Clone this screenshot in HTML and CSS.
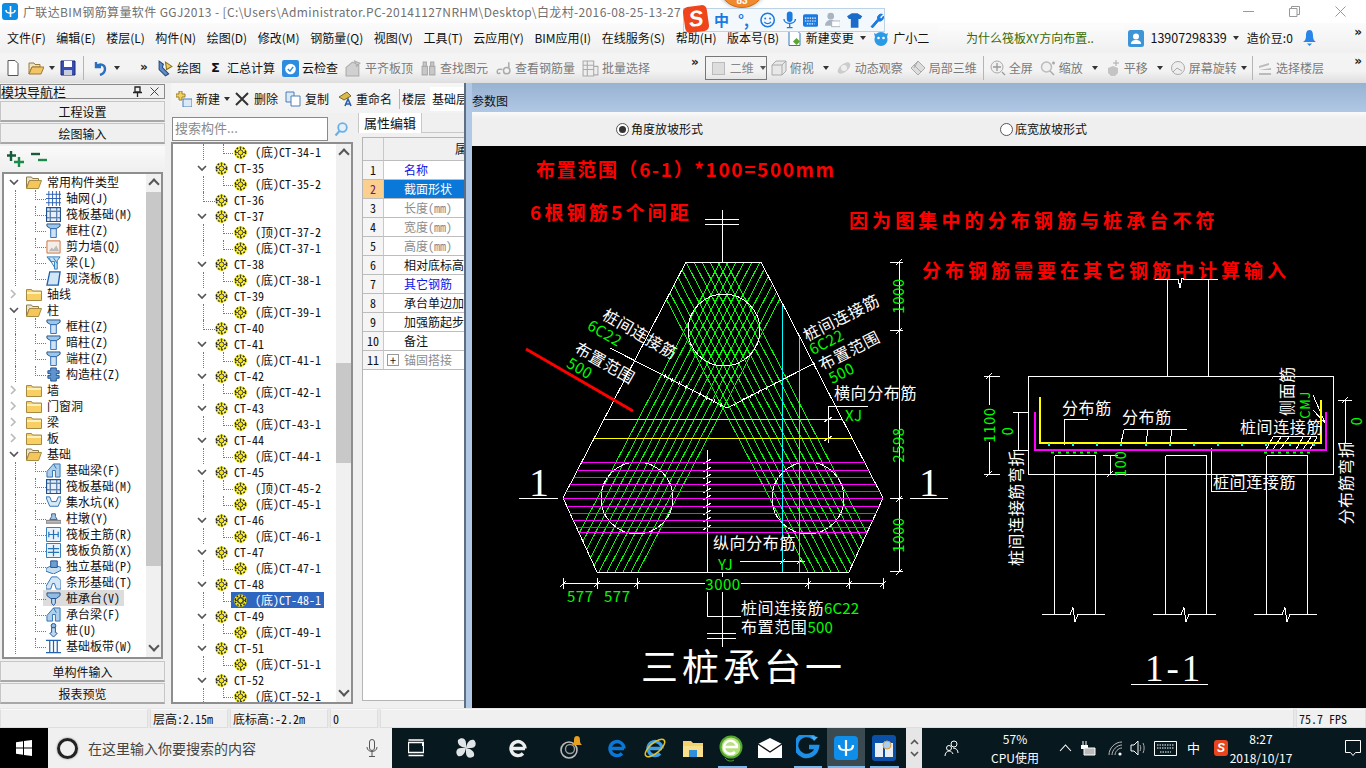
FILE: index.html
```html
<!DOCTYPE html>
<html lang="zh-CN">
<head>
<meta charset="utf-8">
<title>广联达BIM钢筋算量软件 GGJ2013</title>
<link rel="stylesheet" href="styles.css">
</head>
<body>
<svg class="sprites" width="0" height="0" aria-hidden="true">
  <symbol id="gear" viewBox="0 0 13 13"><circle cx="6.5" cy="6.5" r="5" fill="none" stroke="#f5e800" stroke-width="2.6"/><circle cx="6.5" cy="6.5" r="5.2" fill="none" stroke="#222" stroke-width="1.4" stroke-dasharray="1.6 1.7"/><circle cx="6.5" cy="6.5" r="2.6" fill="#f5e800" stroke="#333"/><path d="M6.5 1v3M6.5 9v3M1 6.5h3M9 6.5h3" stroke="#444"/></symbol>
  <symbol id="chev" viewBox="0 0 10 7"><path d="M1 1l4 4 4-4" fill="none" stroke="#555" stroke-width="1.7"/></symbol>
  <symbol id="chevr" viewBox="0 0 7 10"><path d="M1 1l4 4-4 4" fill="none" stroke="#bbb" stroke-width="1.7"/></symbol>
  <symbol id="folder" viewBox="0 0 16 14"><path d="M.5 2.5h5l1 1.5h9v9.500H.5z" fill="#f7cf63" stroke="#a68a45"/><path d="M1 5h14v2H1z" fill="#fdf0b8"/></symbol>
  <symbol id="folderopen" viewBox="0 0 16 14"><path d="M.5 2h5l1 1.500h6v2H3.500L.5 13z" fill="#e8e4d2" stroke="#8f7b45"/><path d="M3.500 5.500h12l-3 8H.5z" fill="#f5c75b" stroke="#a68a45"/></symbol>
  <symbol id="tcol" viewBox="0 0 16 16"><path d="M1 1h14v2.500l-4 2.500H5L1 3.500z" fill="#9cc6ea" stroke="#23507f"/><path d="M5 6h6v9.500H5z" fill="#cfe3f5" stroke="#2b6bb0"/></symbol>
  <symbol id="grid" viewBox="0 0 16 16"><path d="M0 3.500h16M0 8h16M0 12.500h16M3 0v16M7 0v16M11 0v16M14.500 0v16" stroke="#2a5db0" fill="none"/></symbol>
  <symbol id="raft" viewBox="0 0 16 16"><path d="M.5.500h15v15H.5z" fill="#e6f0fa" stroke="#20508f" stroke-width="1.400"/><path d="M4.500 4.500h7v7h-7zM0 4.500h4M12 4.500h4M0 11.500h4M12 11.500h4M4.500 0v4M11.500 0v4M4.500 12v4M11.500 12v4" fill="none" stroke="#20508f"/></symbol>
  <symbol id="wall" viewBox="0 0 16 16"><path d="M1 2h14v13H1z" fill="#f3eee8" stroke="#d06a35"/><path d="M3 13l3-4 2 2 3-4 3 6z" fill="#bbb"/></symbol>
  <symbol id="beam" viewBox="0 0 16 16"><path d="M1 2h14l-3 4v9H9V7H5z" fill="#c4e0f3" stroke="#2c78b8"/><path d="M3 3l6 10M8 3l4 6" stroke="#2c78b8"/></symbol>
  <symbol id="slab" viewBox="0 0 16 16"><path d="M4 1h11l-2 14H1z" fill="#d3e6f6" stroke="#1e5fa8" stroke-width="1.400"/></symbol>
  <symbol id="ccol" viewBox="0 0 16 16"><path d="M5 1h6v3h3v3h-3v2h3v3h-3v3H5v-3H2V9h3V7H2V4h3z" fill="#5f95cf" stroke="#1f4f8f"/></symbol>
  <symbol id="fbeam" viewBox="0 0 16 16"><path d="M1 15V9l7-8h7v14H10V8H7v7z" fill="#aecfea" stroke="#2c6eb0"/><path d="M8 1l3 5" stroke="#2c6eb0"/></symbol>
  <symbol id="sump" viewBox="0 0 16 16"><path d="M0 2h4l2 5h5l2-5h3v3l-3 7H4L1 5z" fill="#d6eaf8" stroke="#2c6eb0"/></symbol>
  <symbol id="pier" viewBox="0 0 16 16"><path d="M6 3h4v3l2 3H4l2-3z" fill="#a9c8e6" stroke="#3a5a88"/><path d="M0 10h16v3H0z" fill="#bbb" stroke="#777"/></symbol>
  <symbol id="rmain" viewBox="0 0 16 16"><path d="M.5.500h15v15H.5z" fill="#e8f2fb" stroke="#2672b8"/><path d="M8 3v10M3 8h10M3 5v6M13 5v6" fill="none" stroke="#2672b8" stroke-width="1.300"/></symbol>
  <symbol id="rneg" viewBox="0 0 16 16"><path d="M.5.500h15v15H.5z" fill="#e8f2fb" stroke="#2672b8"/><path d="M8 2v12M2 6h12M2 10h12" fill="none" stroke="#2672b8" stroke-width="1.300"/></symbol>
  <symbol id="isol" viewBox="0 0 16 16"><path d="M0 10l8-4 8 3v3l-8 4-8-3z" fill="#c7dff2" stroke="#2c6eb0"/><path d="M5 2h7v7H5z" fill="#6f9fd0" stroke="#1f4f8f"/></symbol>
  <symbol id="strip" viewBox="0 0 16 16"><path d="M0 15v-3l6-10h6l4 4v9H11l-2-6H7l-2 6z" fill="#d3e6f6" stroke="#2c6eb0"/></symbol>
  <symbol id="cap" viewBox="0 0 16 16"><path d="M1 2h14v3l-4 3H5L1 5z" fill="#8fbde4" stroke="#1f4f8f"/><path d="M6 8h4v5l-2 2.500L6 13z" fill="#bcd9f1" stroke="#1f4f8f"/></symbol>
  <symbol id="pile" viewBox="0 0 16 16"><circle cx="8" cy="3" r="2.500" fill="#8fbde4" stroke="#1f4f8f"/><path d="M6 5h4v5l2 1-4 4-4-4 2-1z" fill="#bcd9f1" stroke="#1f4f8f"/></symbol>
  <symbol id="band" viewBox="0 0 16 16"><path d="M0 1.500h16M0 14.500h16M4 1v14M8 1v14M12 1v14" stroke="#1f62b0" fill="none" stroke-width="1.300"/></symbol>
  <symbol id="e" viewBox="0 0 24 24"><path d="M6 12.500h13M19 12.500a7 7 0 1 0-2 5" fill="none" stroke="currentColor" stroke-width="3.400"/></symbol>
</svg>

<div class="app">
  <header class="titlebar">
    <span class="applogo"><svg width="15" height="15" viewBox="0 0 15 15"><path d="M7.500 2v11M3 6c0 3 2 3 4.500 3S12 9 12 6" fill="none" stroke="#fff" stroke-width="1.600"/></svg></span>
    <span class="titletext">广联达BIM钢筋算量软件 GGJ2013 - [C:\Users\Administrator.PC-20141127NRHM\Desktop\白龙村-2016-08-25-13-27</span>
    <span class="winbtns">
      <svg width="11" height="11" viewBox="0 0 11 11"><path d="M0 5.500h11" stroke="#999"/></svg>
      <svg width="11" height="11" viewBox="0 0 11 11"><path d="M.5 2.500h7.500v8H.5zM2.500 2.500V.5h8v8H8" fill="none" stroke="#999"/></svg>
      <svg width="11" height="11" viewBox="0 0 11 11"><path d="M.5.500l10 10M10.500.500l-10 10" stroke="#999"/></svg>
    </span>
  </header>

  <nav class="menubar">
    <span>文件(F)</span><span>编辑(E)</span><span>楼层(L)</span><span>构件(N)</span><span>绘图(D)</span><span>修改(M)</span><span>钢筋量(Q)</span><span>视图(V)</span><span>工具(T)</span><span>云应用(Y)</span><span>BIM应用(I)</span><span>在线服务(S)</span><span>帮助(H)</span><span>版本号(B)</span>
    <span class="m-change"><svg width="15" height="17" viewBox="0 0 14 17"><path d="M1.500.500h8l3 3v12h-11z" fill="#fff" stroke="#2c78c8"/><path d="M9 8l3.500 3.500L9 15l-3.500-3.500z" fill="#5da52f"/></svg><span>新建变更</span><i class="caret"></i></span>
    <span class="m-xiao"><svg width="16" height="16" viewBox="0 0 16 16"><path d="M1 3l2 1a7 7 0 0 1 10 0l2-1-1 4a6.500 6.500 0 1 1-12 0z" fill="#2b9ae6"/><circle cx="5.500" cy="8" r="1.300" fill="#fff"/><circle cx="10.500" cy="8" r="1.300" fill="#fff"/></svg><span>广小二</span></span>
    <span class="m-news">为什么筏板XY方向布置..</span>
    <span class="m-user"><svg width="16" height="17" viewBox="0 0 16 17"><rect width="16" height="17" rx="2.500" fill="#3d94d6"/><circle cx="8" cy="6.500" r="3" fill="#fff"/><path d="M3 14c0-3 2-4 5-4s5 1 5 4z" fill="#fff"/></svg><span>13907298339</span><i class="caret"></i><span class="m-dou">造价豆:0</span><svg class="m-bell" width="13" height="18" viewBox="0 0 13 18"><path d="M6.500 1c3 0 3.500 3 3.500 6 0 3 1 5 3 6H0c2-1 3-3 3-6 0-3 .5-6 3.500-6z" fill="#2b84e8"/><path d="M4 14.500h5l-2.500 2.500z" fill="#2b84e8"/></svg></span>
    <span class="more">»</span>
  </nav>

  <div class="toolbar">
    <div class="tb-left">
      <svg class="ic" viewBox="0 0 16 16"><path d="M3 .5h7l3 3v12H3z" fill="#fff" stroke="#555"/></svg>
      <svg class="ic ic-open" viewBox="0 0 16 16"><path d="M1 3h5l1 1.500h5V7H4l-3 7z" fill="#eee3c0" stroke="#9a7b36"/><path d="M4 7h12l-3 7H1z" fill="#f2c465" stroke="#9a7b36"/></svg><i class="caret caret-open"></i>
      <svg class="ic ic-save" viewBox="0 0 16 16"><path d="M1 1h14v14H1z" fill="#3a4fb5" stroke="#1d2a70"/><path d="M4 1h8v6H4z" fill="#fff"/><path d="M4 10h8v5H4z" fill="#c9cde0"/></svg>
      <i class="sep sep-a"></i>
      <svg class="ic ic-undo" viewBox="0 0 16 16"><path d="M4 2v5h5M4 7c3-4 9-3 9 2 0 3-2 5-5 6" fill="none" stroke="#2a6fc0" stroke-width="2.400"/></svg><i class="caret caret-undo"></i>
      <span class="more more-a">»</span>
    </div>
    <div class="tb-group1">
      <span class="tool"><svg class="ic" viewBox="0 0 16 16"><path d="M2 1l4 3-1 3 6 6-3 2-6-6z" fill="#5c8fc8" stroke="#25497e"/><path d="M8 2l6 4-5 3z" fill="#f0d060" stroke="#8a7020"/></svg>绘图</span>
      <span class="tool tool-sigma"><b class="sigma">Σ</b>汇总计算</span>
      <span class="tool"><svg class="ic" viewBox="0 0 16 16"><rect width="16" height="16" rx="2" fill="#2d8ce0"/><circle cx="8" cy="8.500" r="5" fill="#fff"/><path d="M5.500 8.500l2 2 3-4" fill="none" stroke="#2d8ce0" stroke-width="1.400"/></svg>云检查</span>
      <span class="tool off"><svg class="ic" viewBox="0 0 16 16"><path d="M1 15V7l6-5 6 3v10zM9 1l5 2-3 3z" fill="#d0d0d0" stroke="#aaa"/></svg>平齐板顶</span>
      <span class="tool off"><svg class="ic" viewBox="0 0 16 16"><path d="M2 6h5v8H2zM9 6h5v8H9zM3 2h3v4H3zM10 2h3v4h-3z" fill="#c8c8c8" stroke="#aaa"/></svg>查找图元</span>
      <span class="tool off"><svg class="ic" viewBox="0 0 16 16"><circle cx="11" cy="10" r="3" fill="none" stroke="#aaa" stroke-width="1.400"/><path d="M13 7V2M7 9c-3-1-5 0-5 2s2 2 3 1" fill="none" stroke="#aaa" stroke-width="1.400"/></svg>查看钢筋量</span>
      <span class="tool off"><svg class="ic" viewBox="0 0 16 16"><path d="M1 1h10v14H1zM1 5h10M1 9h10M5 1v14M11 6h4v8h-4" fill="#eee" stroke="#aaa"/></svg>批量选择</span>
    </div>
    <div class="tb-group2">
      <span class="more more-b">»</span>
      <span class="combo"><i class="combo-box"></i><span>二维</span><i class="caret"></i></span>
      <span class="tool off"><svg class="ic" viewBox="0 0 16 16"><path d="M1 5h10v10H1zM1 5l4-4h10v10l-4 4M11 5l4-4" fill="#e8e8e8" stroke="#aaa"/></svg>俯视<i class="caret"></i></span>
      <span class="tool off"><svg class="ic" viewBox="0 0 16 16"><ellipse cx="8" cy="8" rx="7.500" ry="4" transform="rotate(-40 8 8)" fill="#ccc"/><circle cx="8" cy="8" r="3" fill="#eee"/></svg>动态观察</span>
      <span class="tool off"><svg class="ic" viewBox="0 0 16 16"><path d="M1 8l7-7 7 7-7 7z" fill="#ddd" stroke="#aaa"/><path d="M4 5l7 7M8 1l-4 7" stroke="#aaa"/></svg>局部三维</span>
      <i class="sep sep-b"></i>
      <span class="tool off"><svg class="ic" viewBox="0 0 16 16"><circle cx="7" cy="7" r="6" fill="#f0f0f0" stroke="#aaa"/><path d="M7 3v8M3 7h8M12 12l3 3" stroke="#999" stroke-width="1.300"/></svg>全屏</span>
      <span class="tool off"><svg class="ic" viewBox="0 0 16 16"><circle cx="6.500" cy="7" r="5" fill="#f0f0f0" stroke="#bbb" stroke-width="1.500"/><path d="M10 11l4 4M12 3h3M13.500 1.500v3" stroke="#aaa" stroke-width="1.500"/></svg>缩放<i class="caret"></i></span>
      <span class="tool off"><svg class="ic" viewBox="0 0 16 16"><path d="M3 8l5-2 5 2v5l-3 3H6l-3-3z" fill="#c4c4c4"/><path d="M11 0v6M8 3h6" stroke="#aaa"/></svg>平移<i class="caret"></i></span>
      <span class="tool off"><svg class="ic" viewBox="0 0 16 16"><circle cx="8" cy="8" r="6.500" fill="#eee" stroke="#aaa"/><path d="M3 12l4-4 5 3" fill="none" stroke="#aaa"/></svg>屏幕旋转<i class="caret caret-tight"></i></span>
      <i class="sep sep-c"></i>
      <span class="tool off"><svg class="ic" viewBox="0 0 16 16"><path d="M2 6l10-3v2L2 8zM2 10l12-2v2H2zM2 13h12v2H2z" fill="#bbb"/></svg>选择楼层</span>
      <span class="more more-c">»</span>
    </div>
  </div>

  <main class="main">
    <aside class="nav">
      <div class="nav-head"><span>模块导航栏</span><span class="nav-ctl"><svg width="9" height="11" viewBox="0 0 9 11"><path d="M2 1h5v5H2zM0 6.500h9M4.500 6.500V11" fill="none" stroke="#222" stroke-width="1.300"/></svg><svg width="9" height="9" viewBox="0 0 9 9"><path d="M.5.500l8 8M8.500.500l-8 8" stroke="#444"/></svg></span></div>
      <div class="nav-btn nav-btn-wide">工程设置</div>
      <div class="nav-btn">绘图输入</div>
      <div class="nav-tools">
        <svg width="18" height="16" viewBox="0 0 18 16"><path d="M4 0v10M0 4.500h9" stroke="#1c5a3c" stroke-width="2.400"/><path d="M12 6v10M7 11h10" stroke="#1a8a4a" stroke-width="2.400"/></svg>
        <svg width="18" height="16" viewBox="0 0 18 16"><path d="M1 3h9" stroke="#1c5a3c" stroke-width="2.400"/><path d="M8 9h9" stroke="#1a8a4a" stroke-width="2.400"/></svg>
      </div>
      <div class="nt">
        <div class="nt-rows">
          <div class="nt-f"><svg class="cv"><use href="#chev"/></svg><svg class="fd"><use href="#folderopen"/></svg><span>常用构件类型</span></div>
          <div class="nt-c"><svg class="ci"><use href="#grid"/></svg><span>轴网(J)</span></div>
          <div class="nt-c"><svg class="ci"><use href="#raft"/></svg><span>筏板基础(M)</span></div>
          <div class="nt-c"><svg class="ci"><use href="#tcol"/></svg><span>框柱(Z)</span></div>
          <div class="nt-c"><svg class="ci"><use href="#wall"/></svg><span>剪力墙(Q)</span></div>
          <div class="nt-c"><svg class="ci"><use href="#beam"/></svg><span>梁(L)</span></div>
          <div class="nt-c"><svg class="ci"><use href="#slab"/></svg><span>现浇板(B)</span></div>
          <div class="nt-f"><svg class="cvr"><use href="#chevr"/></svg><svg class="fd"><use href="#folder"/></svg><span>轴线</span></div>
          <div class="nt-f"><svg class="cv"><use href="#chev"/></svg><svg class="fd"><use href="#folderopen"/></svg><span>柱</span></div>
          <div class="nt-c"><svg class="ci"><use href="#tcol"/></svg><span>框柱(Z)</span></div>
          <div class="nt-c"><svg class="ci"><use href="#tcol"/></svg><span>暗柱(Z)</span></div>
          <div class="nt-c"><svg class="ci"><use href="#tcol"/></svg><span>端柱(Z)</span></div>
          <div class="nt-c"><svg class="ci"><use href="#ccol"/></svg><span>构造柱(Z)</span></div>
          <div class="nt-f"><svg class="cvr"><use href="#chevr"/></svg><svg class="fd"><use href="#folder"/></svg><span>墙</span></div>
          <div class="nt-f"><svg class="cvr"><use href="#chevr"/></svg><svg class="fd"><use href="#folder"/></svg><span>门窗洞</span></div>
          <div class="nt-f"><svg class="cvr"><use href="#chevr"/></svg><svg class="fd"><use href="#folder"/></svg><span>梁</span></div>
          <div class="nt-f"><svg class="cvr"><use href="#chevr"/></svg><svg class="fd"><use href="#folder"/></svg><span>板</span></div>
          <div class="nt-f"><svg class="cv"><use href="#chev"/></svg><svg class="fd"><use href="#folderopen"/></svg><span>基础</span></div>
          <div class="nt-c"><svg class="ci"><use href="#fbeam"/></svg><span>基础梁(F)</span></div>
          <div class="nt-c"><svg class="ci"><use href="#raft"/></svg><span>筏板基础(M)</span></div>
          <div class="nt-c"><svg class="ci"><use href="#sump"/></svg><span>集水坑(K)</span></div>
          <div class="nt-c"><svg class="ci"><use href="#pier"/></svg><span>柱墩(Y)</span></div>
          <div class="nt-c"><svg class="ci"><use href="#rmain"/></svg><span>筏板主筋(R)</span></div>
          <div class="nt-c"><svg class="ci"><use href="#rneg"/></svg><span>筏板负筋(X)</span></div>
          <div class="nt-c"><svg class="ci"><use href="#isol"/></svg><span>独立基础(P)</span></div>
          <div class="nt-c"><svg class="ci"><use href="#strip"/></svg><span>条形基础(T)</span></div>
          <div class="nt-c nt-cur"><svg class="ci"><use href="#cap"/></svg><span>桩承台(V)</span></div>
          <div class="nt-c"><svg class="ci"><use href="#fbeam"/></svg><span>承台梁(F)</span></div>
          <div class="nt-c"><svg class="ci"><use href="#pile"/></svg><span>桩(U)</span></div>
          <div class="nt-c"><svg class="ci"><use href="#band"/></svg><span>基础板带(W)</span></div>
        </div>
        <div class="sb sb-nav"><i class="sb-up"></i><i class="sb-thumb"></i><i class="sb-fill"></i><i class="sb-down"></i></div>
      </div>
      <div class="nav-btn nav-btn-wide">单构件输入</div>
      <div class="nav-btn">报表预览</div>
    </aside>

    <section class="mid">
      <div class="mid-tools">
        <span class="tool"><svg class="ic" viewBox="0 0 16 16"><path d="M3 0h3v3h3v3H6v3H3V6H0V3h3z" fill="#f2d35a" stroke="#9a8030"/><path d="M7 8h9v8H7z" fill="#dbe9f7" stroke="#4a7fb8"/></svg>新建<i class="caret"></i></span>
        <span class="tool"><svg class="ic" viewBox="0 0 16 16"><path d="M2 2l12 12M14 2L2 14" stroke="#333" stroke-width="2"/></svg>删除</span>
        <span class="tool"><svg class="ic" viewBox="0 0 16 16"><path d="M1 1h8v10H1z" fill="#dce9f6" stroke="#4a7fb8"/><path d="M6 5h9v10H6z" fill="#fff" stroke="#4a7fb8"/></svg>复制</span>
        <span class="tool"><svg class="ic" viewBox="0 0 16 16"><path d="M3 6l8-5 4 4-7 4z" fill="#d9b84c" stroke="#7a6a20"/><path d="M9 15l3-7 3 7M10 13h4" fill="none" stroke="#2a5fb0" stroke-width="1.600"/></svg>重命名</span>
        <i class="sep sep-d"></i>
        <span class="mid-floor">楼层</span>
        <span class="mid-layer">基础层</span>
      </div>
      <div class="mid-body">
        <div class="comp">
          <div class="search"><span class="search-box">搜索构件...</span><svg class="search-ic" width="14" height="15" viewBox="0 0 14 15"><circle cx="8.500" cy="5.500" r="4.300" fill="#e4f1fb" stroke="#6ab0e6" stroke-width="1.800"/><path d="M5.500 9l-4 4.500" stroke="#6ab0e6" stroke-width="2.200"/></svg></div>
          <div class="ct">
            <div class="ct-rows">
              <div class="ct-l"><span class="ct-i"><svg class="g"><use href="#gear"/></svg><span>(底)CT-34-1</span></span></div>
              <div class="ct-p"><svg class="cv"><use href="#chev"/></svg><svg class="g"><use href="#gear"/></svg><span>CT-35</span></div>
              <div class="ct-l"><span class="ct-i"><svg class="g"><use href="#gear"/></svg><span>(底)CT-35-2</span></span></div>
              <div class="ct-p ct-n"><i class="cv"></i><svg class="g"><use href="#gear"/></svg><span>CT-36</span></div>
              <div class="ct-p"><svg class="cv"><use href="#chev"/></svg><svg class="g"><use href="#gear"/></svg><span>CT-37</span></div>
              <div class="ct-l"><span class="ct-i"><svg class="g"><use href="#gear"/></svg><span>(顶)CT-37-2</span></span></div>
              <div class="ct-l"><span class="ct-i"><svg class="g"><use href="#gear"/></svg><span>(底)CT-37-1</span></span></div>
              <div class="ct-p"><svg class="cv"><use href="#chev"/></svg><svg class="g"><use href="#gear"/></svg><span>CT-38</span></div>
              <div class="ct-l"><span class="ct-i"><svg class="g"><use href="#gear"/></svg><span>(底)CT-38-1</span></span></div>
              <div class="ct-p"><svg class="cv"><use href="#chev"/></svg><svg class="g"><use href="#gear"/></svg><span>CT-39</span></div>
              <div class="ct-l"><span class="ct-i"><svg class="g"><use href="#gear"/></svg><span>(底)CT-39-1</span></span></div>
              <div class="ct-p ct-n"><i class="cv"></i><svg class="g"><use href="#gear"/></svg><span>CT-40</span></div>
              <div class="ct-p"><svg class="cv"><use href="#chev"/></svg><svg class="g"><use href="#gear"/></svg><span>CT-41</span></div>
              <div class="ct-l"><span class="ct-i"><svg class="g"><use href="#gear"/></svg><span>(底)CT-41-1</span></span></div>
              <div class="ct-p"><svg class="cv"><use href="#chev"/></svg><svg class="g"><use href="#gear"/></svg><span>CT-42</span></div>
              <div class="ct-l"><span class="ct-i"><svg class="g"><use href="#gear"/></svg><span>(底)CT-42-1</span></span></div>
              <div class="ct-p"><svg class="cv"><use href="#chev"/></svg><svg class="g"><use href="#gear"/></svg><span>CT-43</span></div>
              <div class="ct-l"><span class="ct-i"><svg class="g"><use href="#gear"/></svg><span>(底)CT-43-1</span></span></div>
              <div class="ct-p"><svg class="cv"><use href="#chev"/></svg><svg class="g"><use href="#gear"/></svg><span>CT-44</span></div>
              <div class="ct-l"><span class="ct-i"><svg class="g"><use href="#gear"/></svg><span>(底)CT-44-1</span></span></div>
              <div class="ct-p"><svg class="cv"><use href="#chev"/></svg><svg class="g"><use href="#gear"/></svg><span>CT-45</span></div>
              <div class="ct-l"><span class="ct-i"><svg class="g"><use href="#gear"/></svg><span>(顶)CT-45-2</span></span></div>
              <div class="ct-l"><span class="ct-i"><svg class="g"><use href="#gear"/></svg><span>(底)CT-45-1</span></span></div>
              <div class="ct-p"><svg class="cv"><use href="#chev"/></svg><svg class="g"><use href="#gear"/></svg><span>CT-46</span></div>
              <div class="ct-l"><span class="ct-i"><svg class="g"><use href="#gear"/></svg><span>(底)CT-46-1</span></span></div>
              <div class="ct-p"><svg class="cv"><use href="#chev"/></svg><svg class="g"><use href="#gear"/></svg><span>CT-47</span></div>
              <div class="ct-l"><span class="ct-i"><svg class="g"><use href="#gear"/></svg><span>(底)CT-47-1</span></span></div>
              <div class="ct-p"><svg class="cv"><use href="#chev"/></svg><svg class="g"><use href="#gear"/></svg><span>CT-48</span></div>
              <div class="ct-l ct-sel"><span class="ct-i"><svg class="g"><use href="#gear"/></svg><span>(底)CT-48-1</span></span></div>
              <div class="ct-p"><svg class="cv"><use href="#chev"/></svg><svg class="g"><use href="#gear"/></svg><span>CT-49</span></div>
              <div class="ct-l"><span class="ct-i"><svg class="g"><use href="#gear"/></svg><span>(底)CT-49-1</span></span></div>
              <div class="ct-p"><svg class="cv"><use href="#chev"/></svg><svg class="g"><use href="#gear"/></svg><span>CT-51</span></div>
              <div class="ct-l"><span class="ct-i"><svg class="g"><use href="#gear"/></svg><span>(底)CT-51-1</span></span></div>
              <div class="ct-p"><svg class="cv"><use href="#chev"/></svg><svg class="g"><use href="#gear"/></svg><span>CT-52</span></div>
              <div class="ct-l"><span class="ct-i"><svg class="g"><use href="#gear"/></svg><span>(底)CT-52-1</span></span></div>
            </div>
            <div class="sb sb-ct"><i class="sb-up"></i><i class="sb-fill sb-before"></i><i class="sb-thumb"></i><i class="sb-fill"></i><i class="sb-down"></i></div>
          </div>
        </div>
        <div class="props">
          <div class="tabs"><span class="tab">属性编辑</span></div>
          <div class="ptable">
            <div class="pn pn-h"></div><div class="pv pv-h">属性名称</div>
            <div class="pn">1</div><div class="pv blue">名称</div>
            <div class="pn pn-sel">2</div><div class="pv pv-sel">截面形状</div>
            <div class="pn">3</div><div class="pv gray">长度(mm)</div>
            <div class="pn">4</div><div class="pv gray">宽度(mm)</div>
            <div class="pn">5</div><div class="pv gray">高度(mm)</div>
            <div class="pn">6</div><div class="pv">相对底标高(m)</div>
            <div class="pn">7</div><div class="pv blue">其它钢筋</div>
            <div class="pn">8</div><div class="pv">承台单边加强筋</div>
            <div class="pn">9</div><div class="pv">加强筋起步(mm)</div>
            <div class="pn">10</div><div class="pv">备注</div>
            <div class="pn">11</div><div class="pv gray pv-plus"><i class="plus">+</i>锚固搭接</div>
          </div>
        </div>
      </div>
    </section>

    <div class="split"></div>

    <section class="param">
      <div class="param-head">参数图</div>
      <div class="param-radios">
        <label class="radio radio-a"><i class="dot on"></i>角度放坡形式</label>
        <label class="radio radio-b"><i class="dot"></i>底宽放坡形式</label>
      </div>
      <div class="canvas">
        <svg class="cad" viewBox="472 146 894 561" width="894" height="561">
          <defs>
            <clipPath id="hex"><path d="M686 262H761L883 498 849 572H597L563 498z"/></clipPath>
          </defs>
          <g clip-path="url(#hex)" class="ln g1">
            <path d="M720 262L559 572M728 262L567 572M736 262L575 572M744 262L583 572M752 262L591 572M760 262L599 572M768 262L607 572M776 262L615 572M784 262L623 572M792 262L631 572M799 262L638 572"/>
            <path d="M726 262L887 572M718 262L879 572M710 262L871 572M702 262L863 572M694 262L855 572M686 262L847 572M678 262L839 572M670 262L831 572M662 262L823 572M654 262L815 572M647 262L808 572"/>
          </g>
          <g class="ln wh">
            <path d="M686 262H761L883 498 849 572H597L563 498z"/>
            <circle cx="724" cy="330" r="36"/><circle cx="637" cy="498" r="36"/><circle cx="808" cy="498" r="36"/>
            <path d="M722.500 210V262M705 219.500H739M705 224H739"/>
            <path d="M610 348L727 408 815 363"/>
            <path d="M664 378l2-4M671 382l2-4M678 385l2-4M685 389l2-4M692 393l2-4M699 396l2-4M706 400l2-4M713 403l2-4M720 407l2-4M734 406l2-4M742 402l2-4M750 398l2-4M758 394l2-4M766 390l2-4M774 386l2-4M782 382l2-4"/>
            <path d="M519 498.500H558M910 498.500H948"/>
            <path d="M899 262V572M890 262.500H903M890 330.500H903M890 498.500H903M890 571.500H903M896 265l6-6M896 334l6-6M896 502l6-6M896 575l6-6"/>
            <path d="M563 583.500H705M741 583.500H884M563 578V589M597 578V589M637 578V589M808 578V589M849 578V589M883 578V589M560 587l6-6M594 587l6-6M634 587l6-6M805 587l6-6M846 587l6-6M880 587l6-6"/>
            <path d="M707.500 450V572M707.500 592V616H741M722.500 572V577M722.500 592V647M707 633H736M707 638.500H736"/>
            <path d="M703 464l8-5M703 472l8-5M703 479l8-5M703 486l8-5M703 493l8-5M703 500l8-5M703 508l8-5M703 515l8-5M703 522l8-5M703 530l8-5"/>
            <path d="M828 443V406H868M824 422l8-5M824 441l8-5"/>
            <path d="M740 561.500H805M780 564l5-5M797 564l5-5"/>
          </g>
          <g clip-path="url(#hex)" class="ln mg">
            <path d="M560 462.500H890M560 470.500H890M560 477.500H890M560 484.500H890M560 491.500H890M560 498.500H890M560 506.500H890M560 513.500H890M560 520.500H890M560 527.500H890M560 532.500H890"/>
          </g>
          <g clip-path="url(#hex)" class="ln yl"><path d="M580 419.500H870M580 438.500H870"/></g>
          <path class="ln cy" d="M782.500 305V572M799.500 337V572"/>
          <path class="ln rd3" d="M526 349L633 411"/>

          <text class="red-b" x="536" y="177">布置范围（6-1）*100=500mm</text>
          <text class="red-c" x="530" y="220">6根钢筋5个间距</text>
          <text class="red-s" x="849" y="228">因为图集中的分布钢筋与桩承台不符</text>
          <text class="red-s red-s2" x="922" y="278">分布钢筋需要在其它钢筋中计算输入</text>

          <text class="t16 mid-a" transform="translate(637 339) rotate(30)">桩间连接筋</text>
          <text class="gn mid-a" transform="translate(602 338) rotate(30)">6C22</text>
          <text class="t16 mid-a" transform="translate(602 368) rotate(30)">布置范围</text>
          <text class="gn mid-a" transform="translate(577 373) rotate(30)">500</text>
          <text class="t16 mid-a" transform="translate(844 323) rotate(-27)">桩间连接筋</text>
          <text class="gn mid-a" transform="translate(829 347) rotate(-27)">6C22</text>
          <text class="t16 mid-a" transform="translate(852 356) rotate(-27)">布置范围</text>
          <text class="gn mid-a" transform="translate(844 378) rotate(-27)">500</text>
          <text class="t16" x="834" y="399">横向分布筋</text>
          <text class="gn" x="845" y="421">XJ</text>
          <text class="t16" x="713" y="549">纵向分布筋</text>
          <text class="gn" x="718" y="570">YJ</text>
          <text class="t-one" x="539" y="496">1</text>
          <text class="t-one" x="929" y="496">1</text>
          <text class="gn mid-a" x="723" y="590">3000</text>
          <text class="gn" x="567" y="602">577</text>
          <text class="gn" x="604" y="602">577</text>
          <text class="gn mid-a" transform="translate(904 296) rotate(-90)">1000</text>
          <text class="gn mid-a" transform="translate(904 445) rotate(-90)">2598</text>
          <text class="gn mid-a" transform="translate(904 535) rotate(-90)">1000</text>
          <text class="t16" x="741" y="614">桩间连接筋<tspan class="gn-in">6C22</tspan></text>
          <text class="t16" x="741" y="633">布置范围<tspan class="gn-in">500</tspan></text>
          <text class="t-big" x="641" y="681">三桩承台一</text>

          <g class="ln wh">
            <path d="M1028.500 376.500H1333.500V474.500H1028.500z"/>
            <path d="M1167.500 279V376M1208.500 279V376M1155 279.500H1178l2 8 2-9 3 1H1218"/>
            <path d="M1054.500 455.500V614M1095.500 455.500V614M1054.500 455.500H1095.500M1042 614.500H1070l3-7 2 14 3-7H1105"/>
            <path d="M1165.500 455.500V614M1206.500 455.500V614M1165.500 455.500H1206.500M1153 614.500H1181l3-7 2 14 3-7H1216"/>
            <path d="M1266.500 455.500V614M1307.500 455.500V614M1266.500 455.500H1307.500M1254 614.500H1282l3-7 2 14 3-7H1317"/>
            <path d="M1064.500 445V419.500H1088M1124 429.500H1187M1124 430L1121 443M1148 430L1146 443M1172 430L1170 443"/>
            <path d="M1273 436.500H1317M1273 437L1265 451M1281 437L1272 451M1289 437L1279 451M1303 437L1295 451M1311 437L1302 451M1317 437L1309 451"/>
            <path d="M1211.500 448V491H1247"/>
            <path d="M1313 395L1326 425M1313 410L1326 424"/>
            <path d="M989.500 376.500V405M989.500 442V474.500M984 376.500H1000M984 474.500H1000M986 379l6-6M986 477l6-6"/>
            <path d="M1018.500 412V450M1013 412.500H1028M1013 450.500H1028"/>
            <path d="M1345.500 400V443M1338 400.500H1352M1338 443.500H1352M1342 403l6-6"/>
            <path d="M1110.500 455V474M1103 455.500H1118M1107 477l6-6"/>
            <path d="M1131 684.500H1208"/>
          </g>
          <path class="ln yl2" d="M1040 397V443H1321V400"/>
          <path class="ln mg2" d="M1035 412V450H1326V412"/>
          <g class="cdots">
            <path d="M1048 444.500h2M1072 444.500h2M1096 444.500h2M1120 444.500h2M1145 444.500h2M1169 444.500h2M1193 444.500h2M1217 444.500h2M1241 444.500h2M1265 444.500h2M1289 444.500h2M1313 444.500h2"/>
          </g>
          <g class="gdots">
            <path d="M1051 452.500h3M1058 452.500h3M1066 452.500h3M1073 452.500h3M1080 452.500h3M1087 452.500h3M1094 452.500h3M1264 452.500h3M1271 452.500h3M1278 452.500h3M1286 452.500h3M1293 452.500h3M1300 452.500h3M1307 452.500h3"/>
          </g>
          <text class="t16" x="1062" y="414">分布筋</text>
          <text class="t16" x="1122" y="423">分布筋</text>
          <text class="t16" x="1240" y="433">桩间连接筋</text>
          <text class="t16" x="1213" y="488">桩间连接筋</text>
          <text class="t16 mid-a" transform="translate(1292.500 391) rotate(-90)">侧面筋</text>
          <text class="gn gn-s mid-a" transform="translate(1309.500 405) rotate(-90)">CMJ</text>
          <text class="gn mid-a" transform="translate(995 425) rotate(-90)">1100</text>
          <text class="gn mid-a" transform="translate(1013 431) rotate(-90)">0</text>
          <text class="t16 mid-a" transform="translate(1022 508) rotate(-90)">桩间连接筋弯折</text>
          <text class="gn mid-a" transform="translate(1362 421) rotate(-90)">0</text>
          <text class="t16 mid-a" transform="translate(1352 483) rotate(-90)">分布筋弯折</text>
          <text class="gn mid-a" transform="translate(1126 464) rotate(-90)">100</text>
          <text class="t-big t-11" x="1145" y="681">1-1</text>
        </svg>
      </div>
    </section>
  </main>

  <footer class="status">
    <span class="st st-1"></span><span class="st st-2">层高:2.15m</span><span class="st st-3">底标高:-2.2m</span><span class="st st-4">0</span><span class="st st-5"></span><span class="st st-6">75.7 FPS</span>
  </footer>

  <div class="taskbar">
    <span class="start"><svg width="16" height="16" viewBox="0 0 16 16"><path d="M0 2.200L7 1.200V7.500H0zM8 1L16 0V7.500H8zM0 8.500H7V14.800L0 13.800zM8 8.500H16V16L8 15z" fill="#fff"/></svg></span>
    <span class="tsearch"><i class="cortana"></i><span class="tsearch-text">在这里输入你要搜索的内容</span><svg class="tmic" width="12" height="18" viewBox="0 0 12 18"><rect x="3.500" y=".5" width="5" height="11" rx="2.500" fill="none" stroke="#555"/><path d="M1 8c0 6 10 6 10 0M6 13v4M3 17.500h6" fill="none" stroke="#555"/></svg></span>
    <span class="tapps">
      <span class="tapp"><svg width="16" height="18" viewBox="0 0 16 18"><path d="M.5 3.500h15v10H.5zM.5 1h15M.5 16.500h15" fill="none" stroke="#fff" stroke-width="1.300"/><path d="M14 4h2v3h-2z" fill="#fff"/></svg></span>
      <span class="tapp ta-fan"><svg width="24" height="24" viewBox="0 0 24 24"><path d="M12 12C6 11 3 8 4 4c3-3 8-2 8 3zM12 12c1-6 4-9 8-8 3 3 2 8-3 8zM12 12c6 1 9 4 8 8-3 3-8 2-8-3zM12 12c-1 6-4 9-8 8-3-3-2-8 3-8z" fill="#dfe4e6"/></svg></span>
      <span class="tapp ta-ie1"><svg class="e-w" width="24" height="24"><use href="#e"/></svg></span>
      <span class="tapp ta-spiral"><svg width="26" height="26" viewBox="0 0 26 26"><circle cx="11" cy="15" r="8" fill="none" stroke="#bbb" stroke-width="1.600"/><circle cx="12" cy="14" r="4.500" fill="none" stroke="#999" stroke-width="1.400"/><path d="M19 1c3 0 3 3 3 5 0 2 1 3 2 4H14c1-1 2-2 2-4 0-2 0-5 3-5z" fill="#e8a020"/></svg></span>
      <span class="tapp ta-edge"><svg class="e-b" width="24" height="24"><use href="#e"/></svg></span>
      <span class="tapp"><svg class="e-l" width="24" height="24" viewBox="0 0 24 24"><use href="#e"/><ellipse cx="12" cy="12" rx="12" ry="5" transform="rotate(-40 12 12)" fill="none" stroke="#e8c02a" stroke-width="1.500"/></svg></span>
      <span class="tapp"><svg width="22" height="20" viewBox="0 0 22 20"><path d="M1 3h8l2 2h10v14H1z" fill="#f3d36d"/><path d="M1 8h20v11H1z" fill="#f8e08c"/><path d="M7 12h8v7H7z" fill="#2f8fdc"/></svg></span>
      <span class="tapp"><svg width="24" height="30" viewBox="0 0 24 30"><circle cx="12" cy="14" r="10.500" fill="#b9e080" stroke="#4fa82d" stroke-width="2"/><path d="M5 14h14M18 14a6.500 6.500 0 1 0-2 5" fill="none" stroke="#fff" stroke-width="2.600"/><path d="M6 25c2 3 6 4 9 2" fill="none" stroke="#4fa82d"/></svg></span>
      <span class="tapp"><svg width="24" height="20" viewBox="0 0 24 20"><path d="M0 6L12 0l12 6v14H0z" fill="#fff"/><path d="M0 6l12 8 12-8" fill="none" stroke="#111" stroke-width="1.400"/></svg></span>
      <span class="tapp"><svg width="24" height="26" viewBox="0 0 24 26"><path d="M18 3a10.500 10.500 0 1 0 3 9h-8" fill="none" stroke="#1e8fe6" stroke-width="4.500"/><path d="M15 1l7 1-4 4z" fill="#4fb0f0"/></svg></span>
      <span class="tapp tapp-on"><svg width="24" height="24" viewBox="0 0 24 24"><rect width="24" height="24" rx="4" fill="#0f8ee9"/><path d="M12 4v16M5 9c0 5 3 5 7 5s7 0 7-5" fill="none" stroke="#fff" stroke-width="2.200"/></svg></span>
      <span class="tapp"><svg width="24" height="26" viewBox="0 0 24 26"><rect width="24" height="26" rx="3" fill="#0a4fa8"/><path d="M3 8h8v14H3zM13 8h8v14h-8z" fill="#e8eef4"/><circle cx="15" cy="10" r="4" fill="#a8d0f0" stroke="#e09a30"/></svg></span>
      <span class="bars"></span>
    </span>
    <span class="tstrip"><svg width="9" height="6" viewBox="0 0 9 6"><path d="M1 5l3.500-3.500L8 5" fill="none" stroke="#555" stroke-width="1.600"/></svg><svg width="9" height="6" viewBox="0 0 9 6"><path d="M1 1l3.500 3.500L8 1" fill="none" stroke="#555" stroke-width="1.600"/></svg></span>
    <span class="tray">
      <svg class="tr-ppl" width="16" height="18" viewBox="0 0 16 18"><circle cx="10" cy="5" r="3" fill="none" stroke="#fff"/><circle cx="5" cy="9" r="2.500" fill="none" stroke="#fff"/><path d="M1 17c0-3 2-5 4-5s3 1 4 3M9 9c3 0 5 2 5 5" fill="none" stroke="#fff"/></svg>
      <span class="tr-cpu"><span>57%</span><span>CPU使用</span></span>
      <svg class="tr-up" width="13" height="8" viewBox="0 0 13 8"><path d="M1 7l5.500-6L12 7" fill="none" stroke="#fff" stroke-width="1.100"/></svg>
      <svg class="tr-bat" width="17" height="15" viewBox="0 0 17 15"><path d="M3 0v4M6 0v4" stroke="#fff"/><path d="M1 4h7v4H1z" fill="#fff"/><path d="M4 7h11v7H4z" fill="#bbb" stroke="#fff"/></svg>
      <svg class="tr-wifi" width="15" height="15" viewBox="0 0 15 15"><path d="M1 14C1 7 7 1 14 1M4 14c0-5 5-10 10-10M7 14c0-3 3-7 7-7" fill="none" stroke="#bbb"/><circle cx="12" cy="13" r="1.600" fill="#fff"/></svg>
      <svg class="tr-vol" width="16" height="16" viewBox="0 0 16 16"><path d="M1 5h3l4-4v14l-4-4H1z" fill="none" stroke="#fff"/><path d="M10 5c1 2 1 4 0 6M13 3c1.500 3 1.500 7 0 10" fill="none" stroke="#aaa"/></svg>
      <svg class="tr-kb" width="23" height="15" viewBox="0 0 23 15"><path d="M.5.500h22v14H.5z" fill="none" stroke="#fff"/><path d="M3 4h17M3 7h17M6 11h11" stroke="#fff" stroke-dasharray="1.500 1"/></svg>
      <span class="tr-ime">中</span>
      <span class="tr-s">S</span>
      <span class="tr-time"><span>8:27</span><span>2018/10/17</span></span>
      <svg class="tr-note" width="16" height="16" viewBox="0 0 16 16"><path d="M.5.500h15v12h-5l-2.500 3-2.500-3h-5z" fill="none" stroke="#fff"/></svg>
    </span>
  </div>
</div>

<div class="score"><span>83</span></div>
<div class="ime">
  <span class="ime-s">S</span>
  <span class="ime-zh">中</span>
  <span class="ime-p">°,</span>
  <svg class="ime-i" width="16" height="16" viewBox="0 0 16 16"><circle cx="8" cy="8" r="7" fill="none" stroke="#1a7ae0" stroke-width="1.600"/><circle cx="5.500" cy="6.500" r="1" fill="#1a7ae0"/><circle cx="10.500" cy="6.500" r="1" fill="#1a7ae0"/><path d="M4.500 10c2 2.500 5 2.500 7 0" fill="none" stroke="#1a7ae0" stroke-width="1.300"/></svg>
  <svg class="ime-i" width="14" height="18" viewBox="0 0 14 18"><rect x="4" width="6" height="11" rx="3" fill="#1a7ae0"/><path d="M1 8c0 6 12 6 12 0M7 13v4M4 17h6" fill="none" stroke="#1a7ae0" stroke-width="1.400"/></svg>
  <svg class="ime-i" width="16" height="13" viewBox="0 0 16 13"><rect width="16" height="13" rx="2" fill="#1a7ae0"/><path d="M2 4h12M2 7h12M4 10h8" stroke="#fff" stroke-dasharray="1.500 1" stroke-width="1.200"/></svg>
  <svg class="ime-i" width="16" height="16" viewBox="0 0 16 16"><circle cx="6" cy="4" r="3.500" fill="#a8b4c0"/><path d="M0 14c0-4 3-6 6-6s6 2 6 6z" fill="#a8b4c0"/><rect x="7" y="9" width="9" height="6" fill="#fff" stroke="#a8b4c0"/></svg>
  <svg class="ime-i" width="16" height="15" viewBox="0 0 16 15"><path d="M0 3l5-3h6l5 3-2 3h-2v9H4V6H2z" fill="#1a6cc8"/></svg>
  <svg class="ime-i" width="15" height="16" viewBox="0 0 15 16"><path d="M1 15l7-8a4 4 0 0 1 5-5l-3 3 2 2 2-3a4 4 0 0 1-5 5l-6 7z" fill="#1a7ae0" stroke="#1a7ae0"/></svg>
</div>
</body>
</html>
```
FILE: styles.css
```css
* { box-sizing: border-box; }
html, body { margin: 0; padding: 0; }
body {
  width: 1366px; height: 768px; overflow: hidden; position: relative;
  background: #f0f0f0; color: #111;
  font: 12px/16px "Noto Sans CJK SC", "Noto Sans", sans-serif;
}
i { font-style: normal; display: block; }
.sprites { position: absolute; }
.app { display: flex; flex-direction: column; height: 768px; }

/* title */
.titlebar { height: 23px; background: #fff; display: flex; align-items: center; padding-left: 2px; color: #707070; white-space: nowrap; }
.applogo { width: 16px; height: 17px; background: #0e8de6; border-radius: 3px; display: flex; align-items: center; justify-content: center; margin-right: 5px; }
.titletext { font-size: 12px; letter-spacing: .37px; }
.winbtns { display: flex; gap: 35px; margin-left: auto; margin-right: 20px; }

/* menu */
.menubar { height: 30px; background: linear-gradient(#fbfbfb, #f0f0f0); display: flex; align-items: center; gap: 10.600px; padding-left: 7px; white-space: nowrap; position: relative; }
.caret { width: 0; height: 0; border: 3.500px solid transparent; border-top: 4px solid #333; border-bottom: 0; }
.m-change { display: flex; align-items: center; gap: 4px; margin-left: -3px; }
.m-change .caret { margin-left: 2px; }
.m-xiao { display: flex; align-items: center; gap: 4px; margin-left: -3px; }
.m-news { width: 186px; height: 27px; background: linear-gradient(#fcfcfc, #f0f0f0); border-radius: 3px; color: #3a6a00; padding-left: 28px; line-height: 26px; margin-left: -2px; }
.m-user { display: flex; align-items: center; margin-left: -11px; padding-left: 5px; }
.m-user > span:first-of-type { margin-left: 6px; font-size: 12.500px; }
.m-user .caret { margin: 0 8px 0 6px; }
.m-bell { margin-left: 10px; }
.more { font: bold 12px/12px "DejaVu Sans", sans-serif; color: #222; align-self: flex-start; margin-top: 5px; }
.menubar .more { position: absolute; right: 4px; top: 3px; margin: 0; }

/* toolbars */
.toolbar { height: 30px; background: linear-gradient(#f4f4f4 0, #f3f3f3 60%, #dedede 100%); display: flex; align-items: center; white-space: nowrap; }
.ic { width: 16px; height: 16px; flex: none; }
.tool { display: flex; align-items: center; gap: 3px; color: #111; }
.tool.off { color: #7a7a7a; }
.tool .caret { margin-left: 6px; }
.tb-left { display: flex; align-items: center; width: 152px; padding-left: 5px; }
.ic-open { margin-left: 7px; }
.caret-open { margin-left: 5px; }
.ic-save { margin-left: 5px; }
.sep { width: 1px; height: 24px; background: #b5b5b5; }
.sep-a { margin-left: 7px; }
.ic-undo { margin-left: 8px; }
.caret-undo { margin-left: 6px; }
.more-a { margin-left: 20px; }
.tb-group1 { display: flex; align-items: center; gap: 7px; padding-left: 5px; width: 537px; }
.tb-group1 .ic { width: 17px; height: 17px; }
.sigma { font: bold 13px/16px "DejaVu Sans", sans-serif; margin-left: 3px; margin-right: 4px; }
.tb-group2 { display: flex; align-items: center; gap: 7px; flex: 1; position: relative; padding-left: 2px; }
.more-b { margin: 0 -1px 0 0; align-self: flex-start; }
.combo { width: 62px; height: 24px; border: 1px solid #777; display: flex; align-items: center; color: #888; padding-left: 6px; margin-right: -3px; }
.combo-box { width: 13px; height: 13px; background: #ddd; border: 1px solid #bbb; margin-right: 5px; }
.combo .caret { margin-left: 6px; border-top-color: #555; }
.tool .caret-tight { margin-left: 1px; }
.sep-b { margin: 0 -1px; }
.sep-c { margin: 0 -3px 0 -2px; }
.more-c { position: absolute; right: 4px; top: -1px; margin: 0; }

/* main */
.main { height: 625px; display: flex; background: #f0f0f0; }
.nav { width: 165px; margin-right: 6px; padding-top: 1px; display: flex; flex-direction: column; }
.nav-head { height: 15px; border: 1px solid #8a8a8a; background: #f0f0f0; display: flex; justify-content: space-between; align-items: center; font-size: 13px; line-height: 13px; }
.nav-ctl { display: flex; gap: 8px; align-items: center; padding-right: 5px; }
.nav-btn { height: 21px; margin-top: 1px; background: #f0f0f0; border: 1px solid #c6c6c6; border-bottom: 2px solid #a8a8a8; text-align: center; line-height: 19px; font-size: 12px; }
.nav-btn-wide { margin-top: 2px; }
.nav-tools { height: 26px; margin-top: 2px; display: flex; gap: 5px; align-items: center; padding-left: 7px; background: linear-gradient(#fafafa, #efefef); }
.nt { height: 487px; margin: 0 2px; border: 2px solid #8e8e8e; background: #fff; display: flex; overflow: hidden; }
.nt-rows { flex: 1; overflow: hidden; font-feature-settings: "hwid"; }
.nt-f, .nt-c { height: 16px; display: flex; align-items: center; position: relative; white-space: nowrap; }
.nt-f { padding-left: 5px; }
.cv { width: 10px; height: 7px; flex: none; }
.cvr { width: 7px; height: 10px; margin: 0 2px 0 1px; flex: none; }
.fd { width: 16px; height: 14px; margin: 0 5px 0 7px; flex: none; }
.nt-c { padding-left: 42px; }
.ci { width: 15px; height: 15px; margin-right: 5px; flex: none; }
.nt-c::before { content: ""; position: absolute; left: 11px; top: 0; bottom: 0; border-left: 1px dotted #777; }
.nt-c::after { content: ""; position: absolute; left: 31px; top: 0; height: 9px; width: 10px; border-left: 1px dotted #777; border-bottom: 1px dotted #777; }
.nt-cur { background: linear-gradient(to right, transparent 39px, #dcdcdc 39px, #dcdcdc 120px, transparent 120px); }

.sb { width: 15px; flex: none; display: flex; flex-direction: column; background: #f0f0f0; }
.sb-up, .sb-down { height: 18px; flex: none; position: relative; }
.sb-up::after, .sb-down::after { content: ""; position: absolute; left: 4px; top: 6px; width: 6px; height: 6px; border-left: 2px solid #555; border-top: 2px solid #555; transform: rotate(45deg); }
.sb-down::after { transform: rotate(225deg); top: 3px; }
.sb-thumb { background: #c8c8c8; }
.sb-fill { flex: 1; }
.sb-nav .sb-thumb { height: 374px; }
.sb-ct .sb-before { flex: none; height: 201px; }
.sb-ct .sb-thumb { height: 100px; }

.mid { width: 293px; display: flex; flex-direction: column; }
.mid-tools { height: 30px; padding: 1px 0 0 5px; display: flex; align-items: center; gap: 7px; white-space: nowrap; overflow: hidden; background: linear-gradient(#f6f6f6, #f2f2f2); }
.mid-tools .tool { gap: 4px; }
.mid-tools .caret { margin-left: 0; margin-right: -3px; }
.sep-d { height: 20px; margin: 0 -5px 0 0; }
.mid-layer { background: #fff; padding: 4px 0 4px 2px; margin-left: -3px; flex: 1; min-width: 0; overflow: hidden; font-size: 12px; }
.mid-body { flex: 1; display: flex; min-height: 0; }
.comp { width: 182px; padding-top: 4px; display: flex; flex-direction: column; }
.search { height: 25px; display: flex; }
.search-box { width: 156px; height: 24px; margin-left: 1px; background: #fff; border: 1px solid #8a8a8a; color: #8a8a8a; font-size: 13px; line-height: 20px; padding-left: 2px; }
.search-ic { margin: 5px 0 0 6px; }
.ct { width: 182px; height: 562px; border: 2px solid #8e8e8e; background: #fff; display: flex; overflow: hidden; }
.ct-rows { flex: 1; overflow: hidden; font-feature-settings: "hwid"; }
.ct-p, .ct-l { height: 16px; display: flex; align-items: center; position: relative; white-space: nowrap; }
.ct-p { padding-left: 24px; }
.ct-p .cv { margin-right: 8px; }
.g { width: 13px; height: 13px; flex: none; }
.ct-p .g { margin-right: 6px; }
.ct-l { padding-left: 58px; }
.ct-i { display: flex; align-items: center; height: 16px; padding: 0 3px; }
.ct-i .g { margin-right: 8px; }
.ct-sel .ct-i { background: #2f66c0; color: #fff; }
.ct-l::before { content: ""; position: absolute; left: 30px; top: 0; bottom: 0; border-left: 1px dotted #777; }
.ct-l::after { content: ""; position: absolute; left: 50px; top: 0; height: 9px; width: 9px; border-left: 1px dotted #777; border-bottom: 1px dotted #777; }
.ct-n::before { content: ""; position: absolute; left: 30px; top: 0; height: 9px; width: 11px; border-left: 1px dotted #777; border-bottom: 1px dotted #777; }

.props { width: 106px; margin-left: 5px; display: flex; flex-direction: column; }
.tabs { height: 20px; flex: none; border-bottom: 1px solid #c8c8c8; display: flex; margin-bottom: 4px; }
.tab { width: 64px; height: 20px; background: #fff; border: 1px solid #c8c8c8; border-bottom: 0; border-top: 0; text-align: center; line-height: 19px; font-size: 13px; }
.ptable { flex: 1; margin: 0 0 7px 4px; background: #fff; border: 1px solid #b5b5b5; border-right: 0; display: grid; grid-template-columns: 21px 80px; grid-template-rows: 23px; grid-auto-rows: 19px; align-content: start; overflow: hidden; font-feature-settings: "hwid"; }
.pn, .pv { border-bottom: 1px solid #bdbdbd; white-space: nowrap; overflow: hidden; line-height: 18px; }
.pn { text-align: center; background: #f5f5f5; border-right: 1px solid #c8c8c8; }
.pn-h, .pv-h { height: 23px; background: #f0f0f0; }
.pv { padding-left: 20px; }
.pv-h { padding-left: 71px; line-height: 22px; }
.blue { color: #0a14e8; }
.gray { color: #8c8c8c; }
.pn-sel { background: #fbcf8e; color: #7a1a6e; }
.pv-sel { background: #0a78d8; color: #fff; }
.pv-plus { padding-left: 3px; display: flex; align-items: center; }
.plus { width: 12px; height: 12px; border: 1px solid #999; line-height: 10px; text-align: center; color: #222; margin-right: 5px; font-size: 12px; }

.split { width: 8px; border-left: 2px solid #5f6f80; background: #b0c8e4; }
.param { flex: 1; display: flex; flex-direction: column; min-width: 0; }
.param-head { height: 29px; padding: 10px 0 0; background: linear-gradient(#98b2d2, #b0c8e4); color: #111; font-size: 12px; line-height: 16px; }
.param-radios { height: 34px; background: linear-gradient(#fafafa, #efefef 20%, #efefef); display: flex; align-items: center; padding-left: 144px; }
.radio { display: flex; align-items: center; gap: 2px; }
.radio-b { margin-left: 297px; }
.dot { width: 13px; height: 13px; border-radius: 50%; border: 1px solid #555; background: #fff; position: relative; }
.dot.on::after { content: ""; position: absolute; left: 2px; top: 2px; width: 7px; height: 7px; border-radius: 50%; background: #333; }
.canvas { flex: 1; background: #000; overflow: hidden; }
.cad { display: block; }
.ln { fill: none; stroke-width: 1; shape-rendering: crispEdges; }
.wh { stroke: #fff; }
.g1 { stroke: #00ff00; }
.mg { stroke: #ff00ff; stroke-width: 1.500; }
.yl { stroke: #ffff00; stroke-width: 1.500; }
.cy { stroke: #00ffff; stroke-width: 1.500; }
.rd3 { stroke: #ff0000; stroke-width: 3; shape-rendering: auto; }
.yl2 { stroke: #ffff00; stroke-width: 2; }
.mg2 { stroke: #ff00ff; stroke-width: 2; }
.cdots path { stroke: #00ffff; stroke-width: 3; fill: none; }
.gdots path { stroke: #00ff00; stroke-width: 2; fill: none; }
.cad text { font-family: "Noto Sans CJK SC", "Noto Sans", sans-serif; }
.red-b { fill: #ff0000; font-size: 19px; font-weight: 700; letter-spacing: 1.650px; }
.red-c { fill: #ff0000; font-size: 19px; font-weight: 700; letter-spacing: 3.200px; }
.red-s { fill: #ff0000; font-size: 19px; font-weight: 700; letter-spacing: 4.100px; }
.red-s2 { letter-spacing: 4px; }
.t16 { fill: #fff; font-size: 16px; letter-spacing: .6px; }
.gn { fill: #00ff00; font-size: 15px; letter-spacing: .5px; }
.gn-s { font-size: 13px; }
.gn-in { fill: #00ff00; font-size: 15px; letter-spacing: .2px; }
.mid-a { text-anchor: middle; }
.cad .t-one { fill: #fff; font-family: "Liberation Serif", serif; font-size: 40px; text-anchor: middle; }
.t-big { fill: #fff; font-size: 37px; letter-spacing: 4px; }
.cad .t-11 { font-family: "Liberation Serif", serif; letter-spacing: 3px; }

/* status */
.status { height: 20px; padding-top: 1px; display: flex; gap: 2px; background: #e8e8e8; font-feature-settings: "hwid"; }
.st { background: #f0f0f0; border: 1px solid #dedede; border-top-color: #f8f8f8; padding-left: 2px; line-height: 18px; white-space: nowrap; }
.st-1 { width: 148px; }
.st-2 { width: 78px; }
.st-3 { width: 98px; }
.st-4 { width: 48px; }
.st-5 { width: 914px; }
.st-6 { flex: 1; }

/* taskbar */
.taskbar { height: 40px; background: #07181e; display: flex; align-items: stretch; color: #fff; }
.start { width: 48px; background: #000; display: flex; align-items: center; justify-content: center; }
.tsearch { width: 344px; background: #f0f0f0; color: #444; font-size: 14px; display: flex; align-items: center; padding-left: 9px; }
.cortana { width: 21px; height: 21px; flex: none; border-radius: 50%; border: 3px solid #222; box-shadow: 0 0 2px #777; }
.tsearch-text { margin-left: 10px; width: 168px; white-space: nowrap; }
.tmic { margin-left: 110px; }
.tapps { width: 514px; display: flex; align-items: center; padding-left: 5px; position: relative; }
.tapp { width: 38.200px; height: 40px; display: flex; align-items: center; justify-content: center; flex: none; position: relative; }
.ta-fan { margin-left: 12px; }
.ta-ie1 { margin-left: 14px; }
.ta-spiral { margin-left: 14px; }
.ta-edge { margin-left: 8px; }
.e-w { color: #eee; }
.e-b { color: #0a78d8; }
.e-l { color: #3aa0e8; }
.tapp-on { background: #3a4a50; }
.bars { position: absolute; left: 326px; bottom: 0; width: 181px; height: 2px; background: linear-gradient(to right, #76b9ed 0 29px, transparent 29px 76px, #76b9ed 76px 104px, transparent 104px 110px, #76b9ed 110px 147px, transparent 147px 152px, #76b9ed 152px 181px); }
.tstrip { width: 16px; background: #e6e6e6; display: flex; flex-direction: column; align-items: center; justify-content: space-evenly; padding: 4px 0; }
.tray { flex: 1; display: flex; align-items: center; font-size: 12px; position: relative; white-space: nowrap; }
.tr-ppl { margin-left: 22px; }
.tr-cpu, .tr-time { display: flex; flex-direction: column; align-items: center; line-height: 19px; }
.tr-cpu { width: 70px; margin-left: 20px; flex: none; }
.tr-up { margin-left: 9px; }
.tr-bat { margin-left: 8px; }
.tr-wifi { margin-left: 11px; }
.tr-vol { margin-left: 7px; }
.tr-kb { margin-left: 8px; }
.tr-ime { margin-left: 10px; font-size: 13px; }
.tr-s { margin-left: 14px; width: 14px; height: 16px; background: #e8441f; border-radius: 3px; text-align: center; font: italic bold 12px/16px "Liberation Sans", sans-serif; }
.tr-time { width: 70px; margin-left: -2px; flex: none; }
.tr-note { margin-left: 49px; }

/* overlays */
.score { position: absolute; left: 718px; top: -40px; width: 48px; height: 48px; border-radius: 50%; background: #f08a2c; border: 1px solid #d06a10; color: #fff; font: bold 10px/10px "Liberation Sans", sans-serif; display: flex; align-items: flex-end; justify-content: center; padding-bottom: 1px; box-shadow: 0 0 4px #aaa; }
.ime { position: absolute; left: 683px; top: 8px; width: 202px; height: 24px; background: #f3f8fd; border: 1px solid #bcd2e6; display: flex; align-items: center; gap: 7px; }
.ime-s { position: absolute; left: 0; top: -3px; width: 24px; height: 26px; background: #f0441a; color: #fff; border-radius: 5px; text-align: center; font: italic bold 22px/26px "Liberation Sans", sans-serif; transform: rotate(-8deg); }
.ime-zh { margin-left: 30px; color: #1a7ae0; font-size: 15px; font-weight: 700; }
.ime-p { color: #1a7ae0; font-size: 15px; font-weight: 700; width: 16px; margin-left: 2px; }
```
